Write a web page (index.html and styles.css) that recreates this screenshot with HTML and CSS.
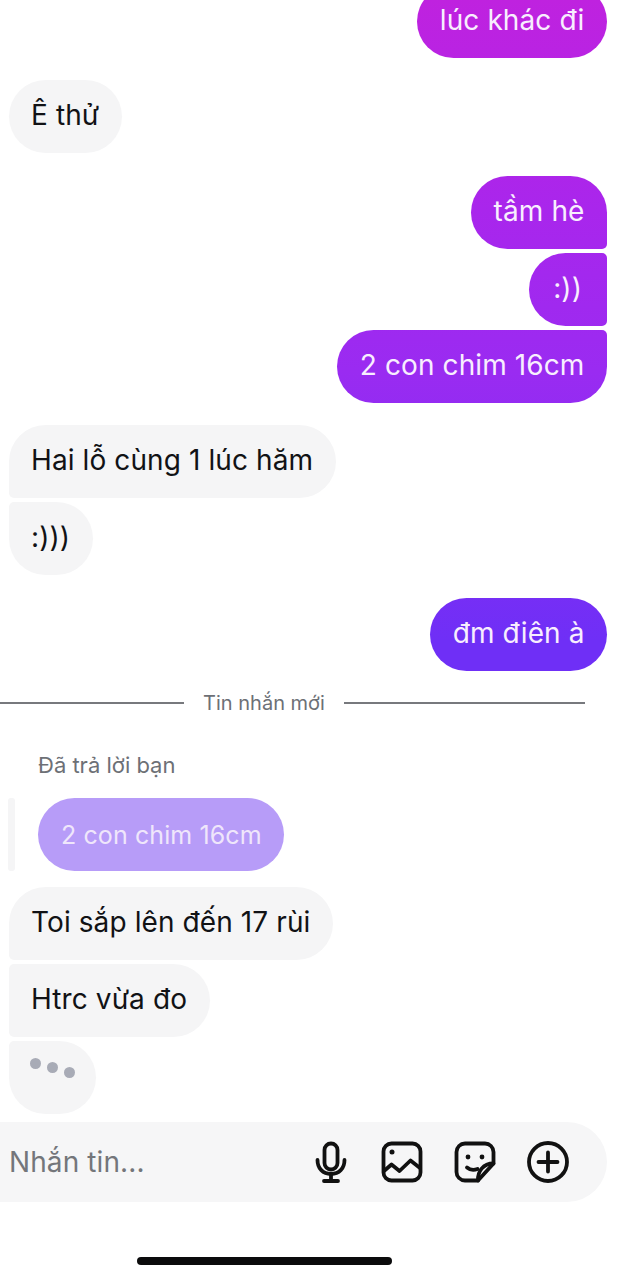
FILE: index.html
```html
<!DOCTYPE html>
<html lang="vi">
<head>
<meta charset="utf-8">
<title>Tin nhắn</title>
<link rel="stylesheet" href="styles.css">
</head>
<body>
<main class="screen">
  <section class="thread">
    <div class="row out first"><div class="bubble sent solo">lúc khác đi</div></div>
    <div class="row in group"><div class="bubble got solo">Ê thử</div></div>
    <div class="row out group"><div class="bubble sent out-top">tầm hè</div></div>
    <div class="row out tight"><div class="bubble sent out-mid">:))</div></div>
    <div class="row out tight"><div class="bubble sent out-end">2 con chim 16cm</div></div>
    <div class="row in group"><div class="bubble got in-top">Hai lỗ cùng 1 lúc hăm</div></div>
    <div class="row in tight"><div class="bubble got in-end">:)))</div></div>
    <div class="row out group"><div class="bubble sent solo">đm điên à</div></div>
  </section>

  <div class="divider">
    <span class="rule rule-left"></span>
    <span class="divider-label">Tin nhắn mới</span>
    <span class="rule rule-right"></span>
  </div>

  <section class="thread">
    <div class="reply-label">Đã trả lời bạn</div>
    <div class="reply">
      <span class="reply-bar"></span>
      <div class="bubble quoted solo">2 con chim 16cm</div>
    </div>
    <div class="row in after-reply"><div class="bubble got in-top">Toi sắp lên đến 17 rùi</div></div>
    <div class="row in tight"><div class="bubble got in-mid">Htrc vừa đo</div></div>
    <div class="row in tight">
      <div class="bubble got in-end typing">
        <span class="dot dot-a"></span><span class="dot dot-b"></span><span class="dot dot-c"></span>
      </div>
    </div>
  </section>

  <div class="composer">
    <span class="placeholder">Nhắn tin...</span>
    <div class="tools">
      <svg class="icon icon-mic" viewBox="0 0 42 42" fill="none" stroke="#111" stroke-width="3.8" stroke-linecap="round" stroke-linejoin="round">
        <rect x="14.500" y="2.500" width="13" height="26" rx="6.500"/>
        <path d="M7.500 19c0 8.500 5.500 14 13.500 14s13.500-5.500 13.500-14"/>
        <path d="M21 33v7M14 40h14"/>
      </svg>
      <svg class="icon" viewBox="0 0 42 42" fill="none" stroke="#111" stroke-width="3.8" stroke-linecap="round" stroke-linejoin="round">
        <rect x="2.500" y="2.500" width="37" height="37" rx="8"/>
        <path d="M3 30l7.500-6.500 8 6.500 11-10.500 9.500 7.500"/>
        <circle cx="11" cy="11" r="2.500" fill="#111" stroke="none"/>
      </svg>
      <svg class="icon" viewBox="0 0 42 42" fill="none" stroke="#111" stroke-width="3.8" stroke-linecap="round" stroke-linejoin="round">
        <path d="M24 39.500H11a8.500 8.500 0 0 1-8.500-8.500V11A8.500 8.500 0 0 1 11 2.500h20a8.500 8.500 0 0 1 8.500 8.500v11.500z"/>
        <path d="M24 39.500c-.5-9 5-17 15.500-17"/>
        <path d="M13 26.500c3 2.500 6.500 3 10.500 1.500"/>
        <circle cx="14" cy="16" r="2.400" fill="#111" stroke="none"/>
        <circle cx="28" cy="16" r="2.400" fill="#111" stroke="none"/>
      </svg>
      <svg class="icon" viewBox="0 0 42 42" fill="none" stroke="#111" stroke-width="3.8" stroke-linecap="round">
        <circle cx="21" cy="21" r="19"/>
        <path d="M21 11.500v19M11.500 21h19"/>
      </svg>
    </div>
  </div>

  <div class="home-wrap"><span class="home-bar"></span></div>
</main>
</body>
</html>
```

FILE: styles.css
```css
* { box-sizing: border-box; }

html, body {
  margin: 0;
  height: 1280px;
  background: #fff;
  overflow: hidden;
}

body {
  font-family: Inter, "Noto Sans", "Liberation Sans", sans-serif;
  color: #16171a;
}

.screen {
  display: flex;
  flex-direction: column;
  height: 1280px;
  overflow: hidden;
}

.thread {
  display: flex;
  flex-direction: column;
}

.row { display: flex; }
.row.in { padding-left: 9px; }
.row.out { justify-content: flex-end; padding-right: 15px; }
.row.first { margin-top: -15px; }
.row.in.group { margin-top: 22px; }
.row.out.group { margin-top: 23px; }
.row.tight { margin-top: 4px; }
.row.after-reply { margin-top: 16px; }

.bubble {
  height: 73px;
  padding: 0 22.500px;
  font-size: 28px;
  letter-spacing: 0.1px;
  line-height: 70px;
  white-space: nowrap;
  border-radius: 36.500px;
}

.sent {
  color: #f8eefe;
  background: linear-gradient(180deg, #bf22df 0, #a926ec 210px, #9a2bf1 370px, #6f2ff6 640px) fixed;
}

.got { background: #f5f5f6; color: #111215; padding-left: 22px; line-height: 71px; }

.solo { border-radius: 36.500px; }
.out-top { border-radius: 36.500px 36.500px 5px 36.500px; }
.out-mid { border-radius: 36.500px 5px 5px 36.500px; padding: 0 25px 0 24px; }
.out-end { border-radius: 36.500px 5px 36.500px 36.500px; }
.in-top { border-radius: 36.500px 36.500px 36.500px 5px; }
.in-mid { border-radius: 5px 36.500px 36.500px 5px; }
.in-end { border-radius: 5px 36.500px 36.500px 36.500px; }

.divider {
  display: flex;
  align-items: center;
  height: 36px;
  margin-top: 14px;
}

.rule { height: 2px; background: #77797d; }
.rule-left { width: 184px; }
.rule-right { width: 241px; }

.divider-label {
  width: 160px;
  text-align: center;
  font-size: 20px;
  color: #6d7076;
}

.reply-label {
  margin: 30px 0 0 38px;
  height: 28px;
  line-height: 28px;
  font-size: 22px;
  color: #6d7076;
}

.reply {
  display: flex;
  gap: 23px;
  margin-top: 19px;
  padding-left: 8px;
}

.reply-bar {
  width: 7px;
  height: 73px;
  background: #f5f5f6;
  border-radius: 3px;
}

.bubble.quoted {
  background: #b79cf8;
  color: #efe6fb;
  font-size: 25px;
  line-height: 74px;
  width: 246px;
  padding: 0 23px;
}

.typing {
  display: flex;
  gap: 0;
  width: 87px;
  padding: 0;
}

.dot {
  width: 11px;
  height: 11px;
  border-radius: 50%;
  background: #a8abb6;
  margin-left: 6px;
}

.dot-a { margin: 17px 0 0 21px; }
.dot-b { margin-top: 21px; }
.dot-c { margin-top: 26px; }

.composer {
  display: flex;
  align-items: center;
  justify-content: space-between;
  width: 607px;
  height: 80px;
  margin-top: 8px;
  padding: 0 38px 0 9px;
  background: #f6f6f7;
  border-radius: 0 40px 40px 0;
}

.placeholder {
  font-size: 28px;
  letter-spacing: 0.1px;
  color: #74767b;
}

.tools {
  display: flex;
  align-items: center;
  gap: 31px;
}

.icon {
  display: block;
  width: 42px;
  height: 42px;
}

.icon-mic { margin-right: -2px; }

.home-wrap {
  display: flex;
  margin-top: 55px;
  padding-left: 137px;
}

.home-bar {
  width: 255px;
  height: 8px;
  background: #0b0b0c;
  border-radius: 4px;
}
```
